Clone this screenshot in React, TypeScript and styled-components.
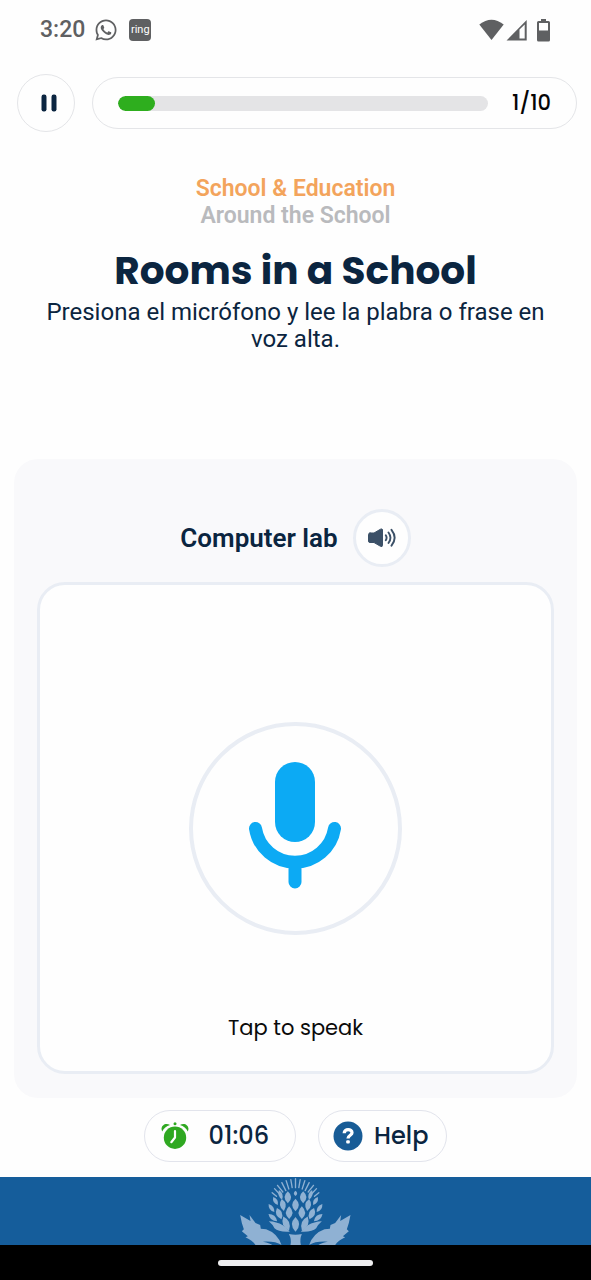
import React from "react";
import styled, { createGlobalStyle } from "styled-components";
import { FaWhatsapp } from "react-icons/fa";

const navy = "#0b2540";
const line = "#e9edf4";
const roboto = `Roboto, "Liberation Sans", sans-serif`;
const display = `Poppins, Inter, "Liberation Sans", sans-serif`;

const GlobalStyle = createGlobalStyle`
  * { box-sizing: border-box; }
  body { margin: 0; background: #fefefe; color: ${navy}; font-family: ${roboto}; }
  button { font: inherit; color: inherit; padding: 0; cursor: pointer; }
  svg { display: block; flex: none; }
`;

const Screen = styled.div`
  display: flex;
  flex-direction: column;
  min-height: 100vh;
`;

const StatusBar = styled.header`
  display: flex;
  align-items: center;
  justify-content: space-between;
  height: 60px;
  padding: 0 41px 0 40px;
  color: #5f6062;
`;

const StatusGroup = styled.div<{ $gap: number }>`
  display: flex;
  align-items: center;
  gap: ${(p) => p.$gap}px;
`;

const Clock = styled.span`
  font: 500 23px/28px ${roboto};
`;

const RingBadge = styled.span`
  display: grid;
  place-items: center;
  width: 22px;
  height: 22px;
  margin-left: 2px;
  border-radius: 4px;
  background: #5f6062;
  color: #fff;
  font: 400 11px/20px ${roboto};
`;

const TopRow = styled.div`
  display: flex;
  align-items: center;
  gap: 17px;
  padding: 14px 14px 0 17px;
`;

const RoundButton = styled.button<{ $thick?: boolean }>`
  display: grid;
  place-items: center;
  flex: none;
  width: 58px;
  height: 58px;
  border: ${(p) => (p.$thick ? 3 : 1)}px solid ${(p) => (p.$thick ? line : "#e4e5e8")};
  border-radius: 50%;
  background: #fefefe;
`;

const ProgressPill = styled.div`
  display: flex;
  align-items: center;
  flex: 1;
  gap: 24px;
  height: 52px;
  padding: 0 25px;
  border: 1px solid #e4e5e8;
  border-radius: 26px;
`;

const Track = styled.div`
  flex: 1;
  height: 15px;
  border-radius: 8px;
  background: #e4e4e6;
  overflow: hidden;
`;

const Fill = styled.div`
  height: 100%;
  border-radius: 8px;
  background: #2eae1e;
`;

const Count = styled.span`
  color: #050505;
  font: 500 21px/24px ${display};
`;

const Intro = styled.section`
  display: flex;
  flex-direction: column;
  padding: 43px 40px 0;
  text-align: center;
`;

const Crumb = styled.span<{ $color: string }>`
  color: ${(p) => p.$color};
  font: 600 23px/27px ${roboto};
`;

const Title = styled.h1`
  margin: 18px 0 4px;
  font: 700 39px/48px ${display};
`;

const Lead = styled.p`
  margin: 0;
  font: 400 24px/27px ${roboto};
`;

const Panel = styled.main`
  margin: 106px 14px 0;
  padding: 50px 23px 24px;
  border-radius: 24px;
  background: #f9f9fb;
`;

const WordRow = styled.div`
  display: flex;
  align-items: center;
  justify-content: center;
  gap: 15px;
  margin-bottom: 15px;
`;

const Word = styled.h2`
  margin: 0;
  font: 600 26px/32px ${roboto};
`;

const SpeakCard = styled.div`
  display: flex;
  flex-direction: column;
  align-items: center;
  gap: 78px;
  padding: 137px 20px 28px;
  border: 3px solid ${line};
  border-radius: 28px;
  background: #fefefe;
`;

const MicButton = styled.button`
  display: grid;
  place-items: center;
  width: 213px;
  height: 213px;
  border: 4px solid ${line};
  border-radius: 50%;
  background: #fefefe;
`;

const Hint = styled.span`
  color: #0a0a0a;
  font: 400 21px/30px ${display};
`;

const Actions = styled.div`
  display: flex;
  justify-content: center;
  gap: 22px;
  padding: 12px 14px 14px;
`;

const pill = `
  display: flex;
  align-items: center;
  height: 52px;
  border: 1px solid #e2e4ec;
  border-radius: 26px;
  background: #fefefe;
`;

const TimerPill = styled.div`
  ${pill}
  gap: 20px;
  padding: 0 26px 0 16px;
  font: 500 24px/28px ${display};
`;

const HelpButton = styled.button`
  ${pill}
  gap: 11px;
  padding: 0 18px 0 14px;
  font: 500 24px/28px ${display};
`;

const Footer = styled.footer`
  margin-top: auto;
`;

const Banner = styled.div`
  display: flex;
  justify-content: center;
  background: #155d9b;
`;

const SystemBar = styled.div`
  display: flex;
  align-items: center;
  justify-content: center;
  height: 35px;
  background: #000;
`;

const HomeHandle = styled.div`
  width: 155px;
  height: 6px;
  border-radius: 3px;
  background: #eeeef0;
`;

const WifiIcon = () => (
  <svg width="25" height="23" viewBox="0 0 25 23" fill="currentColor" aria-label="Wi-Fi">
    <path d="M12.500 21 .3 5.500Q12.500-4 24.700 5.500Z" />
  </svg>
);

const SignalIcon = () => (
  <svg width="21" height="23" viewBox="0 0 21 23" fill="currentColor" aria-label="Signal">
    <path fillRule="evenodd" d="M.5 21.500 20.700 1V21.500ZM13.500 10.500V19.500H18.700V5.500Z" />
  </svg>
);

const BatteryIcon = () => (
  <svg width="13" height="23" viewBox="0 0 13 23" fill="currentColor" aria-label="Battery">
    <path
      fillRule="evenodd"
      d="M4 0H9V2H11.500Q13 2 13 3.500V21Q13 22.500 11.500 22.500H1.500Q0 22.500 0 21V3.500Q0 2 1.500 2H4ZM2 4V11.500H11V4Z"
    />
  </svg>
);

const PauseIcon = () => (
  <svg width="22" height="18" viewBox="-6 0 22 18" fill={navy}>
    <rect x=".5" y=".5" width="5" height="17" rx="2.200" />
    <rect x="10.500" y=".5" width="5" height="17" rx="2.200" />
  </svg>
);

const SpeakerIcon = () => (
  <svg width="30" height="22" viewBox="0 0 30 22" fill="none" stroke="#3b5067" strokeLinecap="round">
    <path
      d="M3 6H7L13.500 2.200Q15.500 1.300 15.500 3V18.500Q15.500 20.200 13.500 19.300L7 15.500H3Q1.500 15.500 1.500 14V7.500Q1.500 6 3 6Z"
      fill="#3b5067"
      strokeWidth="1"
    />
    <path d="M18.800 8.200Q20.400 10.800 18.800 13.300M21.500 5.500Q25.400 10.800 21.500 16M24.500 2.800Q30.800 10.800 24.500 18.700" strokeWidth="1.900" />
  </svg>
);

const MicIcon = () => (
  <svg width="95" height="136" viewBox="0 0 95 136">
    <rect x="27" y="1" width="40" height="80" rx="20" fill="#0caaf4" />
    <path
      d="M7.500 67.500A40 40 0 0 0 86.500 67.500M47 103V121"
      fill="none"
      stroke="#0caaf4"
      strokeWidth="13"
      strokeLinecap="round"
    />
  </svg>
);

const AlarmIcon = () => (
  <svg width="28" height="28" viewBox="0 0 28 28" fill="#2fa821">
    <circle cx="14" cy="15.700" r="11.200" />
    <path d="M1.200 9.500C-1.500 4 4.500 -.2 9 3Q3.500 4.800 1.200 9.500ZM26.800 9.500C29.500 4 23.500 -.2 19 3Q24.500 4.800 26.800 9.500Z" />
    <circle cx="14" cy="1.800" r="1.500" />
    <path d="M14 9V15.500L10.300 20.200" fill="none" stroke="#fff" strokeWidth="2.200" strokeLinecap="round" strokeLinejoin="round" />
  </svg>
);

const HelpIcon = () => (
  <svg width="30" height="30" viewBox="0 0 30 30">
    <circle cx="15" cy="15" r="14.500" fill="#185c96" />
    <path
      d="M11.200 12.200C11.200 7.600 19 7.600 19 11.800C19 14.400 15 14.200 15 17.600"
      fill="none"
      stroke="#fff"
      strokeWidth="3.300"
    />
    <rect x="13.200" y="19.200" width="3.600" height="3.200" rx="1" fill="#fff" />
  </svg>
);

// Bud scales of the thistle: centre x, centre y, half width, half height, tilt.
const scales = [
  [225, 85, 5, 8, 0],
  [202, 97, 10, 18, 0], [248, 97, 10, 18, 0],
  [180, 89, 6, 15, -18], [270, 89, 6, 15, 18],
  [225, 120, 10, 19, 0],
  [187, 120, 9, 18, -10], [263, 120, 9, 18, 10],
  [165, 108, 6, 14, -30], [285, 108, 6, 14, 30],
  [206, 143, 10, 19, 0], [244, 143, 10, 19, 0],
  [176, 146, 9, 18, -22], [274, 146, 9, 18, 22],
  [153, 129, 6, 15, -35], [297, 129, 6, 15, 35],
  [225, 178, 11, 22, 0],
  [197, 176, 10, 23, -22], [253, 176, 10, 23, 22],
  [157, 158, 7, 17, -50], [293, 158, 7, 17, 50],
];

const rays = [
  [225, 68, 225, 41], [215, 68, 211, 44], [235, 68, 239, 44],
  [205, 72, 197, 47], [245, 72, 253, 47], [196, 77, 184, 53],
  [254, 77, 266, 53], [187, 81, 171, 61], [263, 81, 279, 61],
  [177, 87, 162, 71], [273, 87, 288, 71], [168, 94, 155, 83], [282, 94, 295, 83],
];

const leaf =
  "M59 150L90 168L87 150L105 174L119 180L121 191L137 193Q171 205 183 240Q165 228 127 230Q151 235 155 240H105Q96 227 75 217L82 214L64 199L70 193L64 174L59 150Z";
const baseLeaf = "M145 169Q168 170 187 181Q199 190 208 200Q174 202 162 190Q158 180 145 169Z";

const Thistle = () => (
  <svg width="117" height="68" viewBox="50 36 350 204" fill="#8fb1d3">
    {scales.map(([x, y, w, h, tilt]) => (
      <path
        key={`${x}-${y}`}
        d={`M0 ${-h}Q${w * 2} 0 0 ${h}Q${-w * 2} 0 0 ${-h}Z`}
        transform={`translate(${x} ${y}) rotate(${tilt})`}
      />
    ))}
    <g stroke="#8fb1d3" strokeWidth="4" strokeLinecap="round">
      {rays.map(([x1, y1, x2, y2]) => (
        <line key={`${x1}-${x2}`} x1={x1} y1={y1} x2={x2} y2={y2} />
      ))}
    </g>
    <path d={leaf} />
    <path d={leaf} transform="translate(449 0) scale(-1 1)" />
    <path d={baseLeaf} />
    <path d={baseLeaf} transform="translate(449 0) scale(-1 1)" />
    <path d="M205 207Q225 211 244 207Q237 223 241 240H210Q214 223 205 207Z" />
  </svg>
);

export default function App() {
  const step = 1;
  const total = 10;

  return (
    <Screen>
      <GlobalStyle />
      <StatusBar>
        <StatusGroup $gap={9}>
          <Clock>3:20</Clock>
          <FaWhatsapp size={24} aria-label="WhatsApp" />
          <RingBadge>ring</RingBadge>
        </StatusGroup>
        <StatusGroup $gap={2}>
          <WifiIcon />
          <StatusGroup $gap={10}>
            <SignalIcon />
            <BatteryIcon />
          </StatusGroup>
        </StatusGroup>
      </StatusBar>

      <TopRow>
        <RoundButton type="button" aria-label="Pause">
          <PauseIcon />
        </RoundButton>
        <ProgressPill>
          <Track role="progressbar" aria-label="Progress" aria-valuenow={step} aria-valuemin={0} aria-valuemax={total}>
            <Fill style={{ width: `${(step / total) * 100}%` }} />
          </Track>
          <Count>
            {step}/{total}
          </Count>
        </ProgressPill>
      </TopRow>

      <Intro>
        <Crumb $color="#f3a45c">School &amp; Education</Crumb>
        <Crumb $color="#b9babd">Around the School</Crumb>
        <Title>Rooms in a School</Title>
        <Lead>Presiona el micrófono y lee la plabra o frase en voz alta.</Lead>
      </Intro>

      <Panel>
        <WordRow>
          <Word>Computer lab</Word>
          <RoundButton type="button" $thick aria-label="Listen">
            <SpeakerIcon />
          </RoundButton>
        </WordRow>
        <SpeakCard>
          <MicButton type="button" aria-labelledby="speak-hint">
            <MicIcon />
          </MicButton>
          <Hint id="speak-hint">Tap to speak</Hint>
        </SpeakCard>
      </Panel>

      <Actions>
        <TimerPill>
          <AlarmIcon />
          <span>01:06</span>
        </TimerPill>
        <HelpButton type="button">
          <HelpIcon />
          <span>Help</span>
        </HelpButton>
      </Actions>

      <Footer>
        <Banner>
          <Thistle />
        </Banner>
        <SystemBar>
          <HomeHandle />
        </SystemBar>
      </Footer>
    </Screen>
  );
}
